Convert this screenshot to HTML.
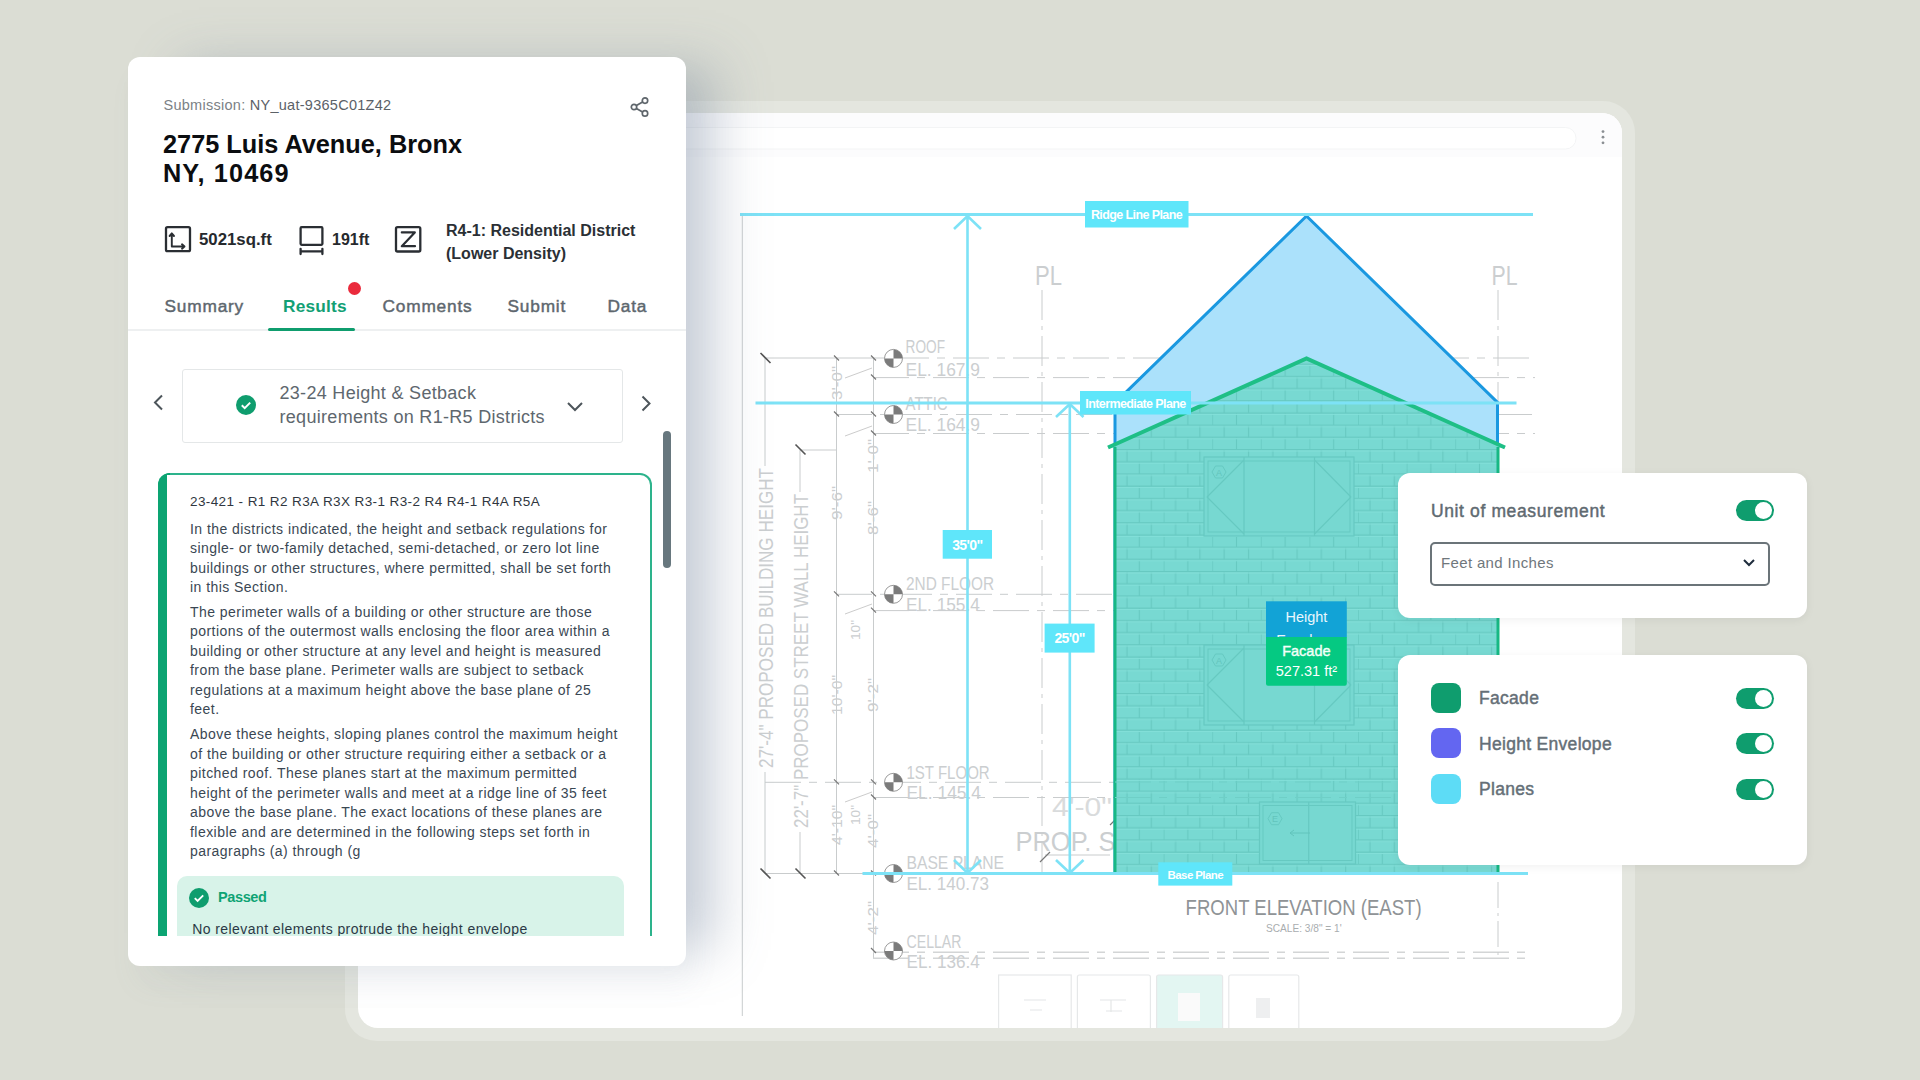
<!DOCTYPE html>
<html><head><meta charset="utf-8">
<style>
*{margin:0;padding:0;box-sizing:border-box}
html,body{width:1920px;height:1080px;overflow:hidden}
body{background:#dbddd4;font-family:"Liberation Sans",sans-serif;position:relative}
.abs{position:absolute}
#frame{left:345px;top:101px;width:1290px;height:940px;border-radius:32px;background:#e4e6df}
#inner{left:358px;top:113px;width:1264px;height:915px;border-radius:20px;background:#fff;overflow:hidden}
#card{left:128px;top:57px;width:558px;height:909px;border-radius:12px;background:#fff;box-shadow:42px -4px 48px -12px rgba(115,130,155,0.36), 8px 20px 30px rgba(120,130,150,0.06)}
.t{position:absolute;white-space:nowrap}
.sb{font-weight:normal !important;-webkit-text-stroke:0.45px currentColor}
.panel{position:absolute;background:#fff;border-radius:12px;box-shadow:0 2px 10px rgba(0,0,0,0.06)}
.tog{position:absolute;width:38px;height:21px;border-radius:11px;background:#0f9d6e}
.tog:after{content:"";position:absolute;right:2px;top:2px;width:17px;height:17px;border-radius:50%;background:#fff}
.sw{position:absolute;left:33px;width:30px;height:30px;border-radius:8px}
.lbl{position:absolute;left:81px;font-size:17.5px;letter-spacing:0.3px;font-weight:normal;-webkit-text-stroke:0.45px currentColor;color:#656f77}
</style></head><body>
<div id="frame" class="abs"></div>
<div id="inner" class="abs">
<svg width="1264" height="915" viewBox="358 113 1264 915" style="position:absolute;left:0;top:0;font-family:'Liberation Sans',sans-serif">
  <defs>
    <pattern id="brick" x="1115" y="449" width="48.6" height="24.4" patternUnits="userSpaceOnUse">
      <rect x="0" y="0" width="48.6" height="24.4" fill="#78d9d2"/>
      <g fill="none" stroke="#67c9c1" stroke-width="1.1">
        <path d="M0 0.6H48.6M0 12.8H48.6M12 0.6V12.8M36.3 0.6V12.8M0.2 12.8V24.4M24.3 12.8V24.4"/>
      </g>
      <g fill="none" stroke="#83e0d9" stroke-width="1">
        <path d="M0 2H48.6M0 14.2H48.6"/>
      </g>
    </pattern>
  </defs>
  <!-- toolbar -->
  <rect x="358" y="113" width="1264" height="44" fill="#fcfcfd"/>
  <rect x="600" y="127.5" width="976" height="21.5" rx="10.5" fill="#fff" stroke="#f3f4f5" stroke-width="1"/>
  <g fill="#8a8e92"><circle cx="1603" cy="131.6" r="1.4"/><circle cx="1603" cy="137.2" r="1.4"/><circle cx="1603" cy="142.8" r="1.4"/></g>
  <!-- CAD gray drawing -->
  <g stroke="#c9cccd" stroke-width="1" fill="none">
    <path d="M742.3 214V1016"/>
    <path d="M765 358V466M765 772V873M800 450V492M800 832V873M836.5 358V873M873.5 358V958"/>
    <path d="M765 358H893"/><path d="M893 358H1535M873 377.6H1535" stroke-dasharray="36 8 8 8"/>
    <path d="M836 414.5H1535M873 433.5H1535" stroke-dasharray="36 8 8 8"/>
    <path d="M800 450H836"/>
    <path d="M836 594.3H1120M873 610.6H1120" stroke-dasharray="36 8 8 8"/>
    <path d="M765 782.3H1120M873 797.5H1120" stroke-dasharray="36 8 8 8"/>
    <path d="M765 873.5H870"/>
    <path d="M873 952.2H1530M873 958.2H1530" stroke-dasharray="36 8 8 8" stroke="#d3d5d6" stroke-width="1.6"/>
    <path d="M1042 290V873" stroke-dasharray="30 6 4 6"/>
    <path d="M1498 290V460" stroke-dasharray="30 6 4 6"/><path d="M1498 882V955" stroke-dasharray="26 5 3 5"/>
    <path d="M1045 855H1110"/>
  </g>
  <g stroke="#555" stroke-width="1.6">
    <path d="M760.5 353l10 10M795.5 444.5l10 10M760.5 868.5l10 10M795.5 868.5l10 10"/>
  </g>
  <g stroke="#777" stroke-width="1.2">
    <path d="M834 355.5l5 5M871 355.5l5 5M871 374.5l5 5M834 411.5l5 5M871 411.5l5 5M871 430.5l5 5M834 591.3l5 5M871 591.3l5 5M871 607.6l5 5M834 779.3l5 5M871 779.3l5 5M871 794.5l5 5M834 870.5l5 5M871 870.5l5 5M871 948l5 5"/>
    <path d="M845 378l27-10M845 436l27-10M845 614l27-10M845 802l27-10" stroke="#ccc" stroke-width="1"/>
    <path d="M1040 862l10 -10M1110 825l10 -10"/>
  </g>
  <!-- datum symbols -->
  <g>
    <g transform="translate(893.5 358.4)"><circle r="9" fill="#fff" stroke="#9a9a9a" stroke-width="1"/><path d="M0 0V-9A9 9 0 0 1 9 0Z M0 0V9A9 9 0 0 1 -9 0Z" fill="#7b7b7b"/></g>
    <g transform="translate(893.5 414.5)"><circle r="9" fill="#fff" stroke="#9a9a9a" stroke-width="1"/><path d="M0 0V-9A9 9 0 0 1 9 0Z M0 0V9A9 9 0 0 1 -9 0Z" fill="#7b7b7b"/></g>
    <g transform="translate(893.5 594.3)"><circle r="9" fill="#fff" stroke="#9a9a9a" stroke-width="1"/><path d="M0 0V-9A9 9 0 0 1 9 0Z M0 0V9A9 9 0 0 1 -9 0Z" fill="#7b7b7b"/></g>
    <g transform="translate(893.5 782.3)"><circle r="9" fill="#fff" stroke="#9a9a9a" stroke-width="1"/><path d="M0 0V-9A9 9 0 0 1 9 0Z M0 0V9A9 9 0 0 1 -9 0Z" fill="#7b7b7b"/></g>
    <g transform="translate(893.5 873.5)"><circle r="9" fill="#fff" stroke="#9a9a9a" stroke-width="1"/><path d="M0 0V-9A9 9 0 0 1 9 0Z M0 0V9A9 9 0 0 1 -9 0Z" fill="#7b7b7b"/></g>
    <g transform="translate(893.5 951)"><circle r="9" fill="#fff" stroke="#9a9a9a" stroke-width="1"/><path d="M0 0V-9A9 9 0 0 1 9 0Z M0 0V9A9 9 0 0 1 -9 0Z" fill="#7b7b7b"/></g>
  </g>
  <g fill="#cbced0" font-size="18" style="font-weight:normal">
    <text x="905.6" y="353.2" textLength="39.4" lengthAdjust="spacingAndGlyphs">ROOF</text>
    <text x="905.6" y="375.7" textLength="74.4" lengthAdjust="spacingAndGlyphs">EL. 167.9</text>
    <text x="905.6" y="410.2" textLength="42" lengthAdjust="spacingAndGlyphs">ATTIC</text>
    <text x="905.6" y="431" textLength="74.4" lengthAdjust="spacingAndGlyphs">EL. 164.9</text>
    <text x="906" y="590" textLength="88" lengthAdjust="spacingAndGlyphs">2ND FLOOR</text>
    <text x="906" y="611" textLength="73.8" lengthAdjust="spacingAndGlyphs">EL. 155.4</text>
    <text x="906.5" y="778.8" textLength="83.2" lengthAdjust="spacingAndGlyphs">1ST FLOOR</text>
    <text x="906.5" y="799" textLength="74.5" lengthAdjust="spacingAndGlyphs">EL. 145.4</text>
    <text x="906.5" y="869" textLength="97.5" lengthAdjust="spacingAndGlyphs">BASE PLANE</text>
    <text x="906.5" y="890" textLength="82.5" lengthAdjust="spacingAndGlyphs">EL. 140.73</text>
    <text x="906.5" y="947.6" textLength="55" lengthAdjust="spacingAndGlyphs">CELLAR</text>
    <text x="906.5" y="968.3" textLength="73.2" lengthAdjust="spacingAndGlyphs">EL. 136.4</text>
    <text x="1035" y="284.6" font-size="28" textLength="27" lengthAdjust="spacingAndGlyphs">PL</text>
    <text x="1491.5" y="284.6" font-size="28" textLength="26" lengthAdjust="spacingAndGlyphs">PL</text>
    <text x="1015.5" y="850.6" font-size="28" textLength="100" lengthAdjust="spacingAndGlyphs">PROP. S</text>
    <text x="1052" y="816" font-size="26" textLength="60" lengthAdjust="spacingAndGlyphs" fill="#d9dbdc">4'-0"</text>
    <text transform="translate(773 768) rotate(-90)" font-size="20" textLength="300" lengthAdjust="spacingAndGlyphs">27'-4"  PROPOSED BUILDING HEIGHT</text>
    <text transform="translate(807.5 828) rotate(-90)" font-size="20" textLength="334" lengthAdjust="spacingAndGlyphs">22'-7"  PROPOSED STREET WALL HEIGHT</text>
    <text transform="translate(842 400) rotate(-90)" font-size="14" textLength="34" lengthAdjust="spacingAndGlyphs">3'-0"</text>
    <text transform="translate(842 520) rotate(-90)" font-size="14" textLength="34" lengthAdjust="spacingAndGlyphs">9'-6"</text>
    <text transform="translate(842 715) rotate(-90)" font-size="14" textLength="40" lengthAdjust="spacingAndGlyphs">10'-0"</text>
    <text transform="translate(842 845) rotate(-90)" font-size="14" textLength="40" lengthAdjust="spacingAndGlyphs">4'-10"</text>
    <text transform="translate(878 473) rotate(-90)" font-size="14" textLength="34" lengthAdjust="spacingAndGlyphs">1'-0"</text>
    <text transform="translate(878 535) rotate(-90)" font-size="14" textLength="34" lengthAdjust="spacingAndGlyphs">8'-6"</text>
    <text transform="translate(878 712) rotate(-90)" font-size="14" textLength="34" lengthAdjust="spacingAndGlyphs">9'-2"</text>
    <text transform="translate(878 848) rotate(-90)" font-size="14" textLength="34" lengthAdjust="spacingAndGlyphs">4'-0"</text>
    <text transform="translate(878 935) rotate(-90)" font-size="14" textLength="34" lengthAdjust="spacingAndGlyphs">4'-2"</text>
    <text transform="translate(860 640) rotate(-90)" font-size="13" textLength="20" lengthAdjust="spacingAndGlyphs">10"</text>
    <text transform="translate(860 825) rotate(-90)" font-size="13" textLength="20" lengthAdjust="spacingAndGlyphs">10"</text>
    <text x="1185.6" y="914.6" font-size="21.8" fill="#8f9396" textLength="236" lengthAdjust="spacingAndGlyphs">FRONT ELEVATION (EAST)</text>
    <text x="1266" y="931.5" font-size="10.5" fill="#a9adaf" textLength="75.6" lengthAdjust="spacingAndGlyphs">SCALE: 3/8" = 1'</text>
  </g>
  <!-- height envelope (blue) -->
  <path d="M1115 873V403L1306.5 216L1497.5 402.5V873Z" fill="#abe1fb" stroke="#1a98e0" stroke-width="3"/>
  <!-- facade -->
  <path d="M1108 447.5L1306.5 358.5L1505 447.5H1498V873H1115V447.5Z" fill="url(#brick)"/>
  <path d="M1108 447.5L1306.5 358.5L1505 447.5" fill="none" stroke="#1ebf86" stroke-width="4"/>
  <path d="M1115 447V873M1498 447V873" stroke="#17b884" stroke-width="3"/>
  <!-- windows on facade -->
  <g fill="#77d8d1" stroke="#66c9c1" stroke-width="1.2">
    <rect x="1204" y="457" width="150" height="79"/>
    <path d="M1244 457V536M1314.5 457V536M1207 497L1244 460M1207 497L1244 534M1351 497L1314.5 460M1351 497L1314.5 534" fill="none"/>
    <rect x="1204" y="645" width="150" height="80"/>
    <path d="M1244 645V725M1314.5 645V725M1207 685L1244 648M1207 685L1244 722M1351 685L1314.5 648M1351 685L1314.5 722" fill="none"/>
    <rect x="1259.5" y="802" width="96" height="62"/>
    <path d="M1308.7 802V864" fill="none"/>
  </g>
  <g fill="none" stroke="#66c9c1" stroke-width="1">
    <path d="M1212 472l3.5-6h7l3.5 6-3.5 6h-7z M1212 660l3.5-6h7l3.5 6-3.5 6h-7z M1268 818.7l3.5-6h7l3.5 6-3.5 6h-7z"/>
    <rect x="1208" y="461" width="142" height="71"/><rect x="1208" y="649" width="142" height="72"/><rect x="1263" y="805.5" width="89" height="55"/>
    <path d="M1115 782H1498M1115 797.5H1498" stroke-dasharray="36 8 8 8" stroke="#6fcfc7"/>
  </g>
  <g fill="#62c4bc" font-size="9" text-anchor="middle"><text x="1219" y="475.5">A</text><text x="1219" y="663.5">A</text><text x="1275" y="822">E</text></g>
  <path d="M1290 833h20M1290 833l4-3M1290 833l4 3" stroke="#62c4bc" stroke-width="1" fill="none"/>
  <!-- planes (cyan) -->
  <g stroke="#7de2f6" fill="none">
    <path d="M740 214.5H1533" stroke-width="3.2"/>
    <path d="M755.5 403H1516.5" stroke-width="3"/>
    <path d="M862.5 873.5H1528" stroke-width="3.2"/>
    <path d="M967.5 216V872M954 229L967.5 216L981 229M954 860L967.5 873L981 860" stroke-width="2.6"/>
    <path d="M1069.8 404V872M1056 417L1069.8 404L1083.5 417M1056 860L1069.8 873L1083.5 860" stroke-width="2.6"/>
  </g>
  <g fill="#5fe6fa">
    <rect x="1085" y="201" width="103.5" height="26.5"/>
    <rect x="1080" y="391" width="111" height="23.5"/>
    <rect x="1158.3" y="862.3" width="74" height="23.3"/>
    <rect x="942.7" y="530" width="49.3" height="28.7"/>
    <rect x="1044.6" y="623.6" width="50" height="29"/>
  </g>
  <g fill="#fff" font-weight="bold" style="letter-spacing:-0.6px">
    <text x="1136.5" y="218.5" font-size="12.5" text-anchor="middle">Ridge Line Plane</text>
    <text x="1135.5" y="407.5" font-size="12.5" text-anchor="middle">Intermediate Plane</text>
    <text x="1195.3" y="878.5" font-size="11.5" text-anchor="middle">Base Plane</text>
    <text x="967.3" y="549.5" font-size="14" text-anchor="middle">35'0"</text>
    <text x="1069.6" y="643" font-size="14" text-anchor="middle">25'0"</text>
  </g>
  <rect x="1266" y="601.3" width="80.8" height="36" fill="#12a3d6"/>
  <text x="1306.4" y="622" font-size="14.5" fill="#e8f7fd" text-anchor="middle">Height</text>
  <text x="1306.4" y="645" font-size="14.5" fill="#e8f7fd" text-anchor="middle">Envelope</text>
  <path d="M1266 637H1346.8V683.8A2 2 0 0 1 1344.8 685.8H1268A2 2 0 0 1 1266 683.8Z" fill="#05c982"/>
  <text x="1306.4" y="656" font-size="14.5" fill="#f4fff9" stroke="#f4fff9" stroke-width="0.4" text-anchor="middle">Facade</text>
  <text x="1306.4" y="675.5" font-size="14.5" fill="#fff" text-anchor="middle">527.31 ft²</text>
  <!-- thumbnails -->
  <g fill="#fff" stroke="#e6e8e9" stroke-width="1.2">
    <rect x="998.6" y="975" width="72.6" height="70"/>
    <rect x="1077.4" y="975" width="73" height="70" rx="2"/>
    <rect x="1156.6" y="975" width="66" height="70" rx="2" fill="#e3f6f2"/>
    <rect x="1228.8" y="975" width="70" height="70" rx="2"/>
  </g>
  <rect x="1178" y="993" width="22" height="28" fill="#fafafa"/>
  <g fill="none" stroke="#e4e6e7" stroke-width="1.2"><path d="M1024 1000h22M1030 1010h12M1100 1000h26M1111 1000v12M1106 1011h16"/></g>
  <rect x="1256" y="998" width="14" height="20" fill="#eeeff0"/>
</svg>
</div>

<div id="card" class="abs">
  <div class="t" style="left:35.5px;top:41px;font-size:14.5px;line-height:14.5px;letter-spacing:0.27px;color:#7b8186">Submission: <span style="color:#5b6167">NY_uat-9365C01Z42</span></div>
  <svg class="abs" style="left:501px;top:39px" width="22" height="22" viewBox="0 0 22 22" fill="none" stroke="#5f666c" stroke-width="1.7"><circle cx="16" cy="4.6" r="2.7"/><circle cx="5" cy="11" r="2.7"/><circle cx="16" cy="17.4" r="2.7"/><path d="M7.4 9.6L13.6 6M7.4 12.4L13.6 16"/></svg>
  <div class="t" style="left:35px;top:72.6px;font-size:25.3px;line-height:29.1px;font-weight:bold;color:#0b0d10">2775 Luis Avenue, Bronx<br><span style="letter-spacing:1.1px">NY, 10469</span></div>
  <!-- stats row -->
  <svg class="abs" style="left:0;top:0" width="558" height="260" viewBox="128 57 558 260" fill="none" stroke="#2a2e33" stroke-width="2.3" stroke-linecap="round" stroke-linejoin="round">
    <rect x="166" y="227.2" width="24" height="24" rx="1.5"/>
    <path d="M171.8 233.5V246.5H184.5M169.6 236L171.8 233.5L174 236M182 244.3L184.5 246.5L182 248.7" stroke-width="1.9"/>
    <rect x="300.6" y="227.2" width="21.8" height="17.6" rx="1"/>
    <path d="M300.6 251.3H322.4M300.6 248.8V254M322.4 248.8V254"/>
    <rect x="396" y="227.2" width="24.3" height="24.3" rx="1.5"/>
    <path d="M401.8 232.4H414.8L401.8 246.2H415" stroke-width="2.2"/>
  </svg>
  <div class="t" style="left:71px;top:174.6px;font-size:16.8px;line-height:16.8px;font-weight:bold;color:#26292d">5021sq.ft</div>
  <div class="t" style="left:204px;top:174.6px;font-size:16px;line-height:16px;font-weight:bold;color:#26292d">191ft</div>
  <div class="t" style="left:318px;top:161.6px;font-size:16px;line-height:23.45px;font-weight:bold;color:#2b3035">R4-1: Residential District<br>(Lower Density)</div>
  <!-- tabs -->
  <div class="t sb" style="left:36.5px;top:240.6px;font-size:17.3px;line-height:17.3px;letter-spacing:0.8px;color:#5e676e">Summary</div>
  <div class="t" style="left:155px;top:240.5px;font-size:17.3px;line-height:17.3px;font-weight:bold;letter-spacing:0.2px;color:#12a074">Results</div>
  <div class="abs" style="left:220px;top:224.5px;width:13px;height:13px;border-radius:50%;background:#ea2a3c"></div>
  <div class="t sb" style="left:254.5px;top:240.6px;font-size:17.3px;line-height:17.3px;letter-spacing:0.8px;color:#5e676e">Comments</div>
  <div class="t sb" style="left:379.5px;top:240.6px;font-size:17.3px;line-height:17.3px;letter-spacing:0.8px;color:#5e676e">Submit</div>
  <div class="t sb" style="left:479.5px;top:240.6px;font-size:17.3px;line-height:17.3px;letter-spacing:0.8px;color:#5e676e">Data</div>
  <div class="abs" style="left:0;top:272px;width:558px;height:2px;background:#eef0f1"></div>
  <div class="abs" style="left:140px;top:270.5px;width:87px;height:3px;background:#0f9d6e;border-radius:2px"></div>
  <!-- rule nav -->
  <svg class="abs" style="left:24px;top:336px" width="14" height="20" viewBox="0 0 14 20" fill="none" stroke="#4d555b" stroke-width="2"><path d="M10 2.5L3 9.5l7 7"/></svg>
  <div class="abs" style="left:54px;top:311.7px;width:440.5px;height:74px;border:1px solid #e4e7e8;border-radius:3px"></div>
  <svg class="abs" style="left:108px;top:338px" width="20" height="20" viewBox="0 0 20 20"><circle cx="10" cy="10" r="10" fill="#0f9d6e"/><path d="M5.8 10.2l2.9 2.9 5.5-5.5" fill="none" stroke="#fff" stroke-width="2"/></svg>
  <div class="t" style="left:151.5px;top:323.6px;font-size:18px;line-height:24px;letter-spacing:0.3px;color:#5e676e">23-24 Height &amp; Setback<br>requirements on R1-R5 Districts</div>
  <svg class="abs" style="left:438px;top:344px" width="18" height="12" viewBox="0 0 18 12" fill="none" stroke="#4d555b" stroke-width="2"><path d="M2 2l7 7 7-7"/></svg>
  <svg class="abs" style="left:511px;top:337px" width="14" height="20" viewBox="0 0 14 20" fill="none" stroke="#4d555b" stroke-width="2"><path d="M3.5 2.5l7 7-7 7"/></svg>
  <div class="abs" style="left:535px;top:374px;width:7.5px;height:137px;border-radius:4px;background:#67777e"></div>
  <!-- rule card -->
  <div class="abs" style="left:30px;top:416px;width:493.5px;height:462.6px;overflow:hidden">
    <div class="abs" style="left:0;top:0;width:493.5px;height:560px;background:#2db38c;border-radius:12px"></div><div class="abs" style="left:0;top:0;width:12px;height:560px;background:#0ca472;border-radius:12px 0 0 12px"></div><div class="abs" style="left:9px;top:2px;width:482.5px;height:556px;background:#fff;border-radius:0 10px 10px 0"></div>
    <div class="t" style="left:32px;top:22.3px;font-size:13.5px;line-height:13.5px;letter-spacing:0.4px;color:#2f3640">23-421 - R1 R2 R3A R3X R3-1 R3-2 R4 R4-1 R4A R5A</div>
    <div class="t" style="left:32px;top:46.6px;font-size:14px;line-height:19.5px;letter-spacing:0.45px;color:#3a4753">In the districts indicated, the height and setback regulations for<br>single- or two-family detached, semi-detached, or zero lot line<br>buildings or other structures, where permitted, shall be set forth<br>in this Section.</div>
    <div class="t" style="left:32px;top:129.7px;font-size:14px;line-height:19.5px;letter-spacing:0.45px;color:#3a4753">The perimeter walls of a building or other structure are those<br>portions of the outermost walls enclosing the floor area within a<br>building or other structure at any level and height is measured<br>from the base plane. Perimeter walls are subject to setback<br>regulations at a maximum height above the base plane of 25<br>feet.</div>
    <div class="t" style="left:32px;top:252.1px;font-size:14px;line-height:19.5px;letter-spacing:0.45px;color:#3a4753">Above these heights, sloping planes control the maximum height<br>of the building or other structure requiring either a setback or a<br>pitched roof. These planes start at the maximum permitted<br>height of the perimeter walls and meet at a ridge line of 35 feet<br>above the base plane. The exact locations of these planes are<br>flexible and are determined in the following steps set forth in<br>paragraphs (a) through (g</div>
    <div class="abs" style="left:19.4px;top:403.4px;width:446.8px;height:80px;border-radius:10px;background:#d8f3e9"></div>
    <svg class="abs" style="left:31.2px;top:415.2px" width="20" height="20" viewBox="0 0 20 20"><circle cx="10" cy="10" r="10" fill="#0f9d6e"/><path d="M5.8 10.2l2.8 2.8 5.6-5.6" fill="none" stroke="#fff" stroke-width="1.9"/></svg>
    <div class="t" style="left:59.9px;top:417.4px;font-size:14.5px;line-height:14.5px;letter-spacing:-0.35px;font-weight:bold;color:#0ea374">Passed</div>
    <div class="t" style="left:34.2px;top:449.2px;font-size:14px;line-height:14px;letter-spacing:0.43px;color:#2b3946">No relevant elements protrude the height envelope</div>
  </div>
</div>
<div class="panel" style="left:1398px;top:473px;width:409px;height:145px">
  <div class="t sb" style="left:33px;top:28px;font-size:17.5px;letter-spacing:0.62px;color:#5f6a71">Unit of measurement</div>
  <div class="tog" style="left:338px;top:27px"></div>
  <div class="abs" style="left:32px;top:69px;width:340px;height:44px;border:2px solid #6b7479;border-radius:5px"></div>
  <div class="t" style="left:43px;top:81px;font-size:15px;letter-spacing:0.35px;color:#6f777c">Feet and Inches</div>
  <svg class="abs" style="left:344px;top:85px" width="14" height="10" viewBox="0 0 14 10" fill="none" stroke="#1f2d3d" stroke-width="2"><path d="M2 2l5 5 5-5"/></svg>
</div>
<div class="panel" style="left:1398px;top:655px;width:409px;height:210px">
  <div class="sw" style="top:28px;background:#0f9d6e"></div>
  <div class="lbl" style="top:33px">Facade</div>
  <div class="tog" style="left:338px;top:33px"></div>
  <div class="sw" style="top:73px;background:#6366f1"></div>
  <div class="lbl" style="top:79px">Height Envelope</div>
  <div class="tog" style="left:338px;top:78px"></div>
  <div class="sw" style="top:119px;background:#5ddcf6"></div>
  <div class="lbl" style="top:124px">Planes</div>
  <div class="tog" style="left:338px;top:124px"></div>
</div>
</body></html>
